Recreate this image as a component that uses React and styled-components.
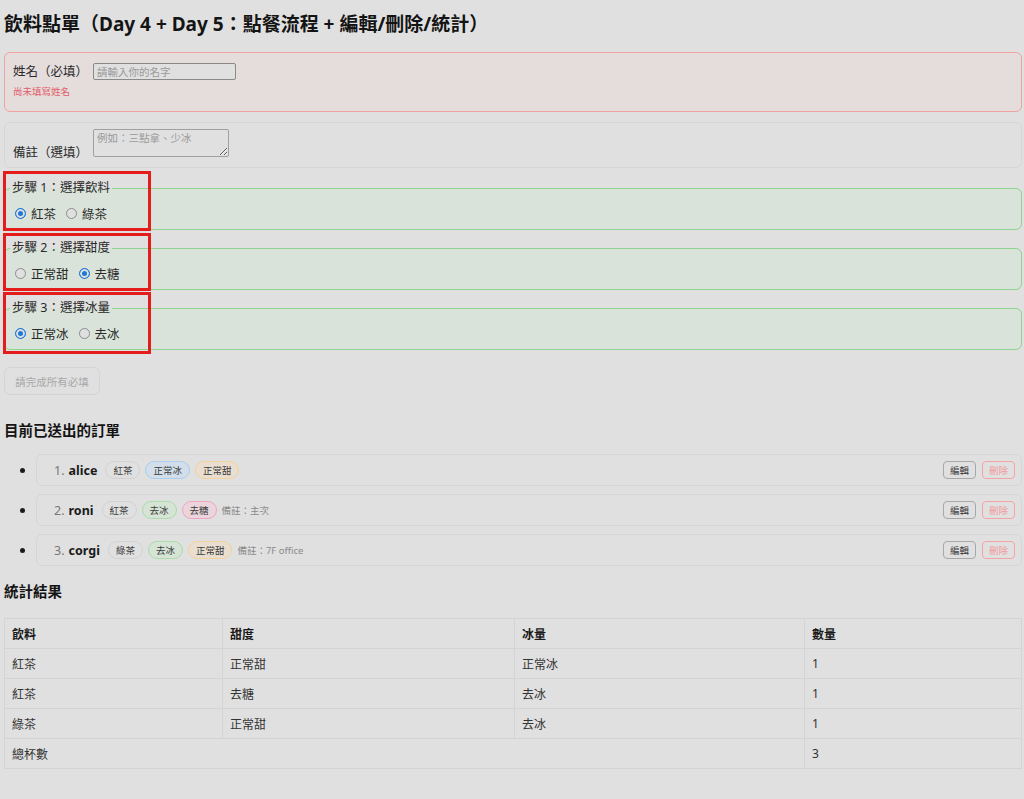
import React from "react";
import styled, { createGlobalStyle } from "styled-components";

const Global = createGlobalStyle`
  html, body { margin: 0; padding: 0; background: #e0e0e0; }
  body {
    font-family: "Noto Sans", "Noto Sans CJK TC", sans-serif;
    color: #1c1c1c;
  }
  * { box-sizing: border-box; }
`;

const Page = styled.div`
  padding: 0 2px 30px 4px;
  min-height: 799px;
`;

const Title = styled.h1`
  margin: 10px 0 0;
  font-size: 19px;
  line-height: 28px;
  font-weight: 700;
  color: #141414;
`;

const Box = styled.div`
  border: 1px solid ${(p) => p.$border};
  background: ${(p) => p.$bg};
  border-radius: 6px;
`;

const NameBox = styled(Box)`
  margin-top: 14px;
  padding: 10px 8px 13px;
`;

const NotesBox = styled(Box)`
  margin-top: 10px;
  padding: 6px 8px 10px;
  display: flex;
  align-items: flex-end;
`;

const Row = styled.div`
  display: flex;
  align-items: center;
`;

const Label = styled.label`
  font-size: 12.5px;
  line-height: 16px;
  color: #2a2a2a;
  margin-right: 5px;
  margin-bottom: ${(p) => p.$mb || 0}px;
`;

const TextInput = styled.input`
  width: 143px;
  height: 17px;
  border: 1px solid #8a8a8a;
  border-radius: 2px;
  background: #e0e0e0;
  font-size: 10.5px;
  padding: 0 3px;
  font-family: inherit;
  &::placeholder { color: #9a9a9a; }
`;

const TextArea = styled.textarea`
  width: 136px;
  height: 28px;
  border: 1px solid #a0a0a0;
  border-radius: 2px;
  background: #e0e0e0;
  font-size: 10.5px;
  line-height: 13px;
  padding: 2px 3px;
  font-family: inherit;
  &::placeholder { color: #9a9a9a; }
`;

const ErrorText = styled.div`
  margin-top: 4px;
  padding-top: 1px;
  font-size: 9.5px;
  line-height: 13px;
  color: #e0606a;
`;

const Step = styled.div`
  position: relative;
  margin-top: ${(p) => p.$mt}px;
`;

const Fieldset = styled.fieldset`
  margin: 0;
  padding: 9px 8px 8px;
  border: 1px solid #8fd48f;
  border-radius: 6px;
  background: #d9e3d9;
  min-width: 0;
`;

const Legend = styled.legend`
  font-size: 12.5px;
  line-height: 16px;
  padding: 0 2px;
  margin-left: -3px;
  color: #2a2a2a;
`;

const Highlight = styled.div`
  position: absolute;
  left: -1px;
  top: ${(p) => p.$top}px;
  width: 148px;
  height: ${(p) => p.$h}px;
  border: 3px solid #e41c1c;
  pointer-events: none;
`;

const RadioRow = styled.div`
  display: flex;
  align-items: center;
  height: 16px;
  font-size: 12.5px;
  color: #2a2a2a;
`;

const RadioLabel = styled.label`
  display: flex;
  align-items: center;
  margin-right: 8px;
`;

const Radio = styled.span`
  width: 11px;
  height: 11px;
  border-radius: 50%;
  margin: 0 5px 0 2px;
  border: 1px solid ${(p) => (p.$on ? "#1e78d8" : "#8c8c8c")};
  background: ${(p) => (p.$on ? "#1e78d8" : "#e0e0e0")};
  box-shadow: ${(p) => (p.$on ? "inset 0 0 0 2px #e0e0e0" : "none")};
  display: inline-block;
`;

const SubmitButton = styled.button`
  margin-top: 17px;
  height: 28px;
  width: 96px;
  border: 1px solid #d4d4d4;
  border-radius: 6px;
  background: #e0e0e0;
  color: #a8a8a8;
  font-size: 10.5px;
  font-family: inherit;
  padding: 0;
`;

const Heading = styled.h2`
  margin: ${(p) => p.$mt}px 0 0;
  font-size: 14.5px;
  line-height: 20px;
  font-weight: 700;
  color: #141414;
`;

const OrderList = styled.ul`
  margin: 14px 0 0;
  padding-left: 32px;
  list-style: disc;
`;

const OrderItem = styled.li`
  margin-bottom: 8px;
  font-size: 13px;
`;

const OrderCard = styled.div`
  height: 32px;
  border: 1px solid #d6d6d6;
  border-radius: 6px;
  display: flex;
  align-items: center;
  padding: 0 6px 0 17px;
  gap: 5px;
`;

const Num = styled.span`
  color: #777;
  font-size: 12.5px;
  margin-right: -1px;
`;

const Name = styled.span`
  font-weight: 700;
  font-size: 12.5px;
  color: #1a1a1a;
  margin-right: 3px;
`;

const Tag = styled.span`
  display: inline-flex;
  align-items: center;
  height: 18px;
  padding: 0 7px;
  border-radius: 10px;
  font-size: 9.5px;
  color: #3a3a3a;
  border: 1px solid ${(p) => p.$border};
  background: ${(p) => p.$bg};
`;

const Note = styled.span`
  font-size: 9.5px;
  color: #8a8a8a;
`;

const Spacer = styled.div`
  flex: 1;
`;

const SmallButton = styled.button`
  height: 18px;
  padding: 0 6px;
  border-radius: 4px;
  font-size: 9.5px;
  font-family: inherit;
  background: #e0e0e0;
  border: 1px solid ${(p) => (p.$danger ? "#f4a4a4" : "#a8a8a8")};
  color: ${(p) => (p.$danger ? "#f29a9a" : "#3a3a3a")};
  margin-left: ${(p) => p.$ml || 0}px;
`;

const Table = styled.table`
  margin-top: 17px;
  width: 100%;
  border-collapse: collapse;
  font-size: 12px;
`;

const Th = styled.th`
  text-align: left;
  font-weight: 700;
  height: 30px;
  padding: 0 7px;
  border: 1px solid #d4d4d4;
  color: #1a1a1a;
  width: ${(p) => p.$w};
`;

const Td = styled.td`
  height: 30px;
  padding: 0 7px;
  border: 1px solid #d4d4d4;
  color: #333;
`;

const tagStyles = {
  gray: { border: "#d2d2d2", bg: "#e0e0e0" },
  blue: { border: "#a8cdee", bg: "#d2dfea" },
  orange: { border: "#f3d29c", bg: "#e9ded0" },
  green: { border: "#aadcaa", bg: "#d5e4d5" },
  pink: { border: "#f0a4c0", bg: "#ebd5dd" },
};

const orders = [
  { name: "alice", tags: [["紅茶", "gray"], ["正常冰", "blue"], ["正常甜", "orange"]] },
  { name: "roni", tags: [["紅茶", "gray"], ["去冰", "green"], ["去糖", "pink"]], note: "備註：主次" },
  { name: "corgi", tags: [["綠茶", "gray"], ["去冰", "green"], ["正常甜", "orange"]], note: "備註：7F office" },
];

const steps = [
  { legend: "步驟 1：選擇飲料", options: ["紅茶", "綠茶"], on: 0, mt: 12, hl: { top: -9, h: 60 } },
  { legend: "步驟 2：選擇甜度", options: ["正常甜", "去糖"], on: 1, mt: 10, hl: { top: -7, h: 58 } },
  { legend: "步驟 3：選擇冰量", options: ["正常冰", "去冰"], on: 0, mt: 10, hl: { top: -8, h: 62 } },
];

const rows = [
  ["紅茶", "正常甜", "正常冰", "1"],
  ["紅茶", "去糖", "去冰", "1"],
  ["綠茶", "正常甜", "去冰", "1"],
];

export default function App() {
  return (
    <>
      <Global />
      <Page>
        <Title>飲料點單（Day 4 + Day 5：點餐流程 + 編輯/刪除/統計）</Title>

        <NameBox $border="#f0a2a2" $bg="#e5dcdc">
          <Row>
            <Label>姓名（必填）</Label>
            <TextInput placeholder="請輸入你的名字" />
          </Row>
          <ErrorText>尚未填寫姓名</ErrorText>
        </NameBox>

        <NotesBox $border="#d6d6d6" $bg="#e0e0e0">
          <Label $mb={-4}>備註（選填）</Label>
          <TextArea placeholder="例如：三點拿、少冰" />
        </NotesBox>

        {steps.map((s) => (
          <Step key={s.legend} $mt={s.mt}>
            <Fieldset>
              <Legend>{s.legend}</Legend>
              <RadioRow>
                {s.options.map((o, i) => (
                  <RadioLabel key={o}>
                    <Radio $on={i === s.on} />
                    {o}
                  </RadioLabel>
                ))}
              </RadioRow>
            </Fieldset>
            <Highlight $top={s.hl.top} $h={s.hl.h} />
          </Step>
        ))}

        <SubmitButton disabled>請完成所有必填</SubmitButton>

        <Heading $mt={25}>目前已送出的訂單</Heading>
        <OrderList>
          {orders.map((o, i) => (
            <OrderItem key={o.name}>
              <OrderCard>
                <Num>{i + 1}.</Num>
                <Name>{o.name}</Name>
                {o.tags.map(([t, c]) => (
                  <Tag key={t} $border={tagStyles[c].border} $bg={tagStyles[c].bg}>
                    {t}
                  </Tag>
                ))}
                {o.note && <Note>{o.note}</Note>}
                <Spacer />
                <SmallButton>編輯</SmallButton>
                <SmallButton $danger $ml={1}>刪除</SmallButton>
              </OrderCard>
            </OrderItem>
          ))}
        </OrderList>

        <Heading $mt={15}>統計結果</Heading>
        <Table>
          <thead>
            <tr>
              <Th $w="218px">飲料</Th>
              <Th $w="292px">甜度</Th>
              <Th $w="290px">冰量</Th>
              <Th>數量</Th>
            </tr>
          </thead>
          <tbody>
            {rows.map((r, i) => (
              <tr key={i}>
                {r.map((c, j) => (
                  <Td key={j}>{c}</Td>
                ))}
              </tr>
            ))}
            <tr>
              <Td colSpan={3}>總杯數</Td>
              <Td>3</Td>
            </tr>
          </tbody>
        </Table>
      </Page>
    </>
  );
}
